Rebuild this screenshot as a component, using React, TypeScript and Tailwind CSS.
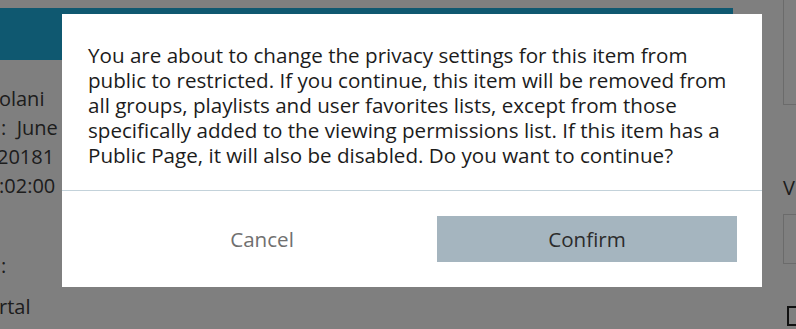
import React from "react";

const lines = [
  "You are about to change the privacy settings for this item from",
  "public to restricted. If you continue, this item will be removed from",
  "all groups, playlists and user favorites lists, except from those",
  "specifically added to the viewing permissions list. If this item has a",
  "Public Page, it will also be disabled. Do you want to continue?",
];

function BackgroundPage() {
  return (
    <div className="flex h-full w-full bg-white text-[#3a3a3a]">
      {/* main column */}
      <div className="w-[733px] shrink-0 pt-[8px]">
        <div className="h-[52px] w-full bg-[#1eb0e0]" />
        <div className="flex flex-col pt-[24px] text-[20px] leading-[29px]">
          <div className="-ml-[14px]">Bolani</div>
          <div className="pl-[1px]">:&nbsp; June</div>
          <div className="-ml-[3px]">20181</div>
          <div className="-ml-[1px]">:02:00</div>
          <div className="h-[51px]" />
          <div className="pl-[1px]">:</div>
          <div className="mt-[12px] -ml-[1px]">rtal</div>
        </div>
      </div>
      {/* right column */}
      <div className="ml-[50px] flex shrink-0 flex-col">
        <div className="-mt-[4px] h-[109px] w-[40px] border border-[#d6d6d6]" />
        <div className="mt-[72px] text-[20px] leading-[22px]">Visibility</div>
        <div className="mt-[15px] h-[50px] w-[40px] border border-[#d6d6d6]" />
        <div className="ml-[4px] mt-[42px] h-[20px] w-[20px] border-2 border-[#222]" />
      </div>
    </div>
  );
}

export default function App() {
  return (
    <div
      className="relative h-[329px] w-[796px] overflow-hidden"
      style={{ fontFamily: '"Open Sans", "Noto Sans", sans-serif' }}
    >
      <BackgroundPage />
      <div className="absolute inset-0 bg-black/50" />
      <div className="absolute left-[62px] top-[14px] w-[700px] bg-white">
        <div className="px-[26px] pb-[22px] pt-[29px] text-[20.6px] leading-[25px] text-[#1c1c1c]">
          {lines.map((l) => (
            <div key={l} className="whitespace-nowrap">
              {l}
            </div>
          ))}
        </div>
        <div className="h-px bg-[#c3d2da]" />
        <div className="flex px-[25px] pt-[25px] pb-[25px]">
          <button className="h-[46px] flex-1 text-[20.6px] text-[#707070]">Cancel</button>
          <button className="h-[46px] w-[300px] bg-[#a5b5bf] text-[20.6px] text-[#2c2c2c]">
            Confirm
          </button>
        </div>
      </div>
    </div>
  );
}
